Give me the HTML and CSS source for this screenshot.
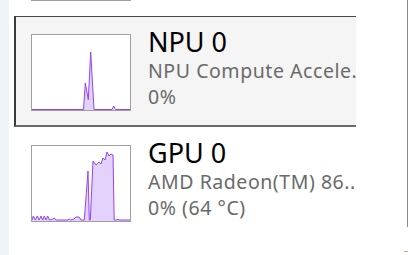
FILE: index.html
```html
<!DOCTYPE html>
<html>
<head>
<meta charset="utf-8">
<link rel="stylesheet" href="styles.css">
</head>
<body>
<div class="app">
  <div class="strip"></div>
  <div class="list">
    <div class="cards">
      <div class="card">
        <svg class="graph" width="98" height="75" viewBox="0 0 98 75"></svg>
      </div>
      <div class="card selected">
        <svg class="graph" width="98" height="75" viewBox="0 0 98 75">
          <path class="area" d="M51.5 75 L53.3 48 L56.3 64.7 L58.7 17 L62 75 Z M80 75 L81.7 71 L83.4 75 Z"/>
          <path class="line" d="M0 74.5 L51.5 74.5 L53.3 48 L56.3 64.7 L58.7 17 L62 74.5 L80 74.5 L81.7 71 L83.4 74.5 L98 74.5"/>
        </svg>
        <div class="info">
          <div class="title">NPU 0</div>
          <div class="sub">NPU Compute Accele.</div>
          <div class="sub">0%</div>
        </div>
      </div>
      <div class="card">
        <svg class="graph" width="98" height="75" viewBox="0 0 98 75">
          <path class="area" d="M0 75 L0 74 L1.3 70 L3.3 74 L5.3 70 L7.2 74 L9 70 L10.7 74 L12.3 70 L14 74 L15.7 70 L17.5 74 L20 73.5 L22.3 72 L24 74 L36 74 L37.3 73 L38.6 74 L42 73 L44 71 L47 71 L49 74 L52.3 74 L56 25 L57.3 74 L58.3 74 L61 15 L64 19 L67 16 L69 18 L71 12 L73 14 L75 6 L77 10 L79 8 L81 9 L82.2 74 L85 74 L86 73 L87 74 L98 74 L98 75 Z"/>
          <path class="line" d="M0 74 L1.3 70 L3.3 74 L5.3 70 L7.2 74 L9 70 L10.7 74 L12.3 70 L14 74 L15.7 70 L17.5 74 L20 73.5 L22.3 72 L24 74 L36 74 L37.3 73 L38.6 74 L42 73 L44 71 L47 71 L49 74 L52.3 74 L56 25 L57.3 74 L58.3 74 L61 15 L64 19 L67 16 L69 18 L71 12 L73 14 L75 6 L77 10 L79 8 L81 9 L82.2 74 L85 74 L86 73 L87 74 L98 74"/>
        </svg>
        <div class="info">
          <div class="title">GPU 0</div>
          <div class="sub">AMD Radeon(TM) 86..</div>
          <div class="sub">0% (64 °C)</div>
        </div>
      </div>
    </div>
  </div>
  <div class="scrollzone">
    <div class="scrollbar"></div>
    <div class="grip"></div>
  </div>
</div>
</body>
</html>
```
FILE: styles.css
```css
* { box-sizing: border-box; }
html, body {
  margin: 0;
  padding: 0;
  background: #ffffff;
  overflow: hidden;
}
body {
  font-family: "Noto Sans", "Open Sans", sans-serif;
}
.app {
  display: flex;
  width: 408px;
  height: 255px;
}
.strip {
  width: 9px;
  flex: none;
  background: #eef4f8;
}
.list {
  width: 347px;
  flex: none;
  overflow: hidden;
  padding-left: 5px;
}
.cards {
  margin-top: -94px;
  display: flex;
  flex-direction: column;
  width: 420px;
}
.card {
  display: flex;
  align-items: flex-start;
  height: 110px;
  padding: 17px 0 0 15px;
  border-style: solid;
  border-color: transparent;
  border-width: 1px 0 2px 2px;
}
.card.selected {
  height: 111px;
  background: #f5f5f5;
  border-color: #4a4a4a #4a4a4a #6a6a6a #3c3c3c;
  border-width: 1px 1px 2px 2px;
}
.graph {
  flex: none;
  display: block;
  width: 100px;
  height: 77px;
  border: 1px solid #a0a0a0;
  background: #ffffff;
}
.area {
  fill: #e3d2fb;
  stroke: none;
}
.line {
  fill: none;
  stroke: #9445f2;
  stroke-width: 1;
  stroke-linejoin: round;
}
.info {
  margin-left: 17px;
  margin-top: -6px;
  white-space: nowrap;
}
.title {
  font-size: 27px;
  line-height: 28px;
  color: #000000;
}
.sub {
  font-size: 19.5px;
  line-height: 26px;
  letter-spacing: 0.55px;
  color: #6a6a6a;
}
.title + .sub {
  margin-top: 2px;
}
.scrollzone {
  flex: 1;
  display: flex;
  flex-direction: column;
  align-items: flex-end;
  justify-content: space-between;
}
.scrollbar {
  width: 1px;
  height: 227px;
  background: #8a8a8a;
}
.grip {
  width: 4px;
  height: 1px;
  margin-bottom: 3px;
  background: #c9a585;
}
```
